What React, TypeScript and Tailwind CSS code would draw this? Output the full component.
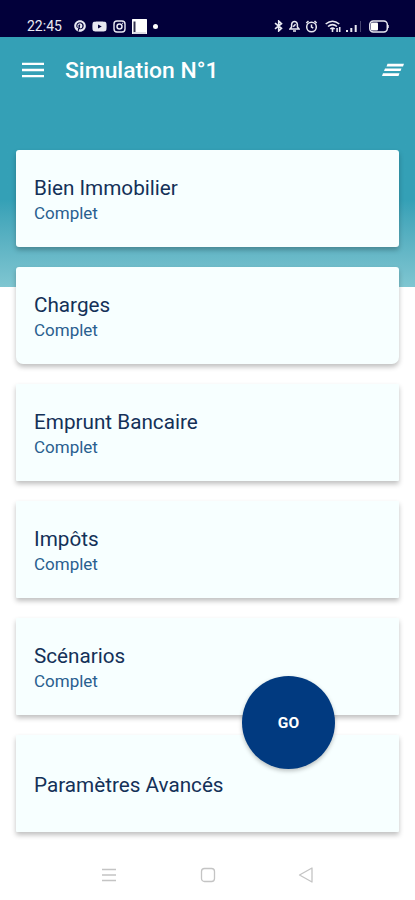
import { FaPinterest, FaYoutube } from "react-icons/fa";
import clsx from "clsx";

const sections = [
    { title: "Bien Immobilier", status: "Complet" },
    { title: "Charges", status: "Complet" },
    { title: "Emprunt Bancaire", status: "Complet" },
    { title: "Impôts", status: "Complet" },
    { title: "Scénarios", status: "Complet" },
    { title: "Paramètres Avancés", status: "" },
];

function StatusBar() {
    return (
        <div className="h-[37px] bg-[#02003a] flex items-start justify-between pt-[19px] pl-[27px] pr-[26px] text-[#e9e9f2]">
            <div className="flex items-center h-[14px]">
                <span className="w-[36px] text-[14px] leading-[14px] whitespace-nowrap">
                    22:45
                </span>
                <FaPinterest className="ml-[11px] w-3 h-3" />
                <FaYoutube className="ml-[6px] w-[15px] h-[15px]" />
                <svg className="ml-[6px] w-[13px] h-[13px]" viewBox="0 0 13 13" fill="none" stroke="currentColor">
                    <rect x="1" y="1" width="11" height="11" rx="3" strokeWidth="1.4" />
                    <circle cx="6.5" cy="6.5" r="2.5" strokeWidth="1.5" />
                    <path d="M9.2 3.4h.9" strokeWidth="1.2" />
                </svg>
                <svg className="ml-[6px] w-[15px] h-[15px]" viewBox="0 0 15 15">
                    <rect width="15" height="15" rx="0.5" fill="#ffffff" />
                    <path d="M2.5 2.5v10.5" stroke="#33324f" strokeWidth="2" />
                    <path d="M1 14h13" stroke="#bdbdca" />
                </svg>
                <span className="ml-[6px] w-[5px] h-[5px] rounded-full bg-white" />
            </div>

            <div className="flex items-center h-[14px]">
                <svg className="w-[9px] h-3" viewBox="0 0 9 12" fill="none" stroke="currentColor" strokeWidth="1.6">
                    <path d="M1 3.2l6.5 5.2L4.7 11V1l2.8 2.6L1 8.8" />
                </svg>
                <svg className="ml-[6px] w-[11px] h-3" viewBox="0 0 11 12" fill="none" stroke="currentColor" strokeWidth="1.5">
                    <path d="M1 9h9L8.4 7V4.5Q8 1.5 5.5 1.5T2.6 4.5V7zM4 11h3M4.2 6.8l2.4-2.6" />
                </svg>
                <svg className="ml-[5px] w-[13px] h-[13px]" viewBox="0 0 12 13" fill="none" stroke="currentColor" strokeWidth="1.5">
                    <circle cx="6" cy="7" r="4.8" />
                    <path d="M6 4.5V7l1.8 1.2M.8 3L3 1M11.2 3L9 1" />
                </svg>
                <svg className="ml-[7px] w-4 h-[13px]" viewBox="0 0 16 13" fill="none" stroke="currentColor" strokeWidth="1.6">
                    <path d="M.7 4Q7.5-1.5 14.3 4M3 6.5Q7.5 2.8 12 6.5M5.3 9Q7.5 7.2 9.7 9" />
                    <path d="M7.5 9v3M12.1 12V8M14.7 7v5" />
                </svg>
                <svg className="ml-[5px] w-[16px] h-3" viewBox="0 0 16 12" fill="currentColor">
                    <path d="M0 10h2v2H0zM4.3 8h2v4h-2zM8.7 5h2v7h-2z" />
                    <path d="M14 1h1v11h-1z" fillOpacity=".3" />
                </svg>
                <svg className="ml-[7px] w-5 h-[13px]" viewBox="0 0 20 13">
                    <rect x=".8" y="1" width="17.5" height="11" rx="3.5" fill="none" stroke="currentColor" strokeWidth="1.5" />
                    <rect x="2" y="2.5" width="7" height="8" rx="1" fill="#ffffff" />
                    <path d="M19 5v3" stroke="currentColor" strokeWidth="1.5" />
                </svg>
            </div>
        </div>
    );
}

function Header() {
    return (
        <header className="h-[250px] bg-linear-to-b from-[#34a0b6] from-65% to-[#7fc6d1] text-white">
            <div className="flex items-center h-[66px] pl-[22px] pr-[11px]">
                <svg className="w-[22px] h-4" viewBox="0 0 22 16" stroke="currentColor" strokeWidth="2.3">
                    <path d="M0 1.8h22M0 8h22M0 14.2h22" />
                </svg>
                <h1 className="ml-[21px] pt-[2px] text-[22.9px] font-medium leading-none whitespace-nowrap">
                    Simulation N°1
                </h1>
                {/* slanted ends on each bar */}
                <svg className="ml-auto w-[22px] h-[14px]" viewBox="0 0 22 14" fill="currentColor">
                    <path d="M5.5 .8H22L21 3.4H4.5zM3 5.5h16.5l-1 2.6H2zM1 10.3h16.5l-1 2.7H0z" />
                </svg>
            </div>
        </header>
    );
}

export default function App() {
    return (
        <div className="relative w-full h-[900px] overflow-hidden bg-white font-['Roboto',sans-serif]">
            <StatusBar />
            <Header />

            <main className="-mt-[137px] relative flex flex-col gap-[20.5px] px-4">
                {sections.map((section, i) => (
                    <section
                        key={section.title}
                        className={clsx(
                            "h-[96.5px] flex flex-col justify-center bg-[#f7ffff] pl-[18px] shadow-[0_3px_5px_rgba(0,0,0,0.25)]",
                            section.status ? "pt-[5px]" : "pt-[3px]",
                            i === 0 && "rounded-[3px]",
                            i === 1 && "rounded-t-[3px] rounded-b-[7px]",
                            i > 1 && "rounded-[1px]"
                        )}
                    >
                        <h2 className="text-[20.7px] leading-[26px] text-[#143158] whitespace-nowrap">
                            {section.title}
                        </h2>
                        {section.status && (
                            <p className="text-[17px] leading-[25px] text-[#29608f]">{section.status}</p>
                        )}
                    </section>
                ))}
            </main>

            <button className="absolute left-[242px] top-[676px] w-[93px] h-[93px] pt-[3px] rounded-full bg-[#013a80] text-white text-[15.5px] font-bold shadow-[0_2px_4px_rgba(0,0,0,0.25)]">
                GO
            </button>

            <nav className="mt-[33px] flex items-center justify-between pl-[101px] pr-[101px] text-[#c4c4c4]">
                <svg className="w-4 h-5" viewBox="0 0 16 20" stroke="currentColor" strokeWidth="1.3">
                    <path d="M1 4.5h14M1 10h14M1 15.5h14" />
                </svg>
                <svg className="w-4 h-5" viewBox="0 0 16 20" fill="none" stroke="currentColor" strokeWidth="1.3">
                    <rect x="1.5" y="3.5" width="13" height="13" rx="3" />
                </svg>
                <svg className="w-4 h-5" viewBox="0 0 16 20" fill="none" stroke="currentColor" strokeWidth="1.3" strokeLinejoin="round">
                    <path d="M14 3v14L1.5 10z" />
                </svg>
            </nav>
        </div>
    );
}
